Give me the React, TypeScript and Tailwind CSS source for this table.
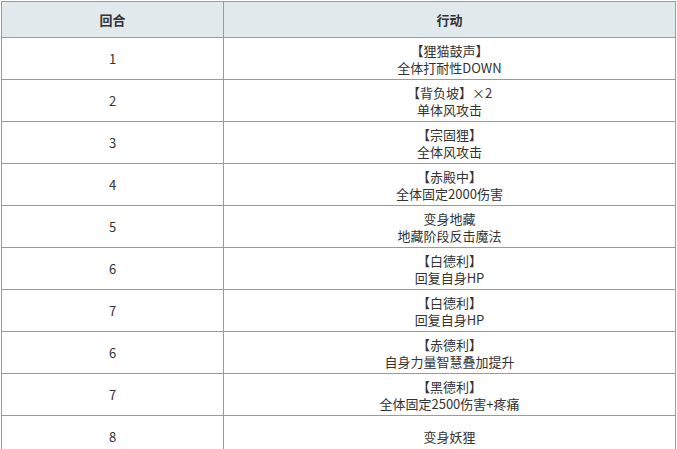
const rows: { turn: string; lines: string[] }[] = [
  { turn: "1", lines: ["【狸猫鼓声】", "全体打耐性DOWN"] },
  { turn: "2", lines: ["【背负坡】×2", "单体风攻击"] },
  { turn: "3", lines: ["【宗固狸】", "全体风攻击"] },
  { turn: "4", lines: ["【赤殿中】", "全体固定2000伤害"] },
  { turn: "5", lines: ["变身地藏", "地藏阶段反击魔法"] },
  { turn: "6", lines: ["【白德利】", "回复自身HP"] },
  { turn: "7", lines: ["【白德利】", "回复自身HP"] },
  { turn: "6", lines: ["【赤德利】", "自身力量智慧叠加提升"] },
  { turn: "7", lines: ["【黑德利】", "全体固定2500伤害+疼痛"] },
  { turn: "8", lines: ["变身妖狸"] },
];

function Cell({ children, wide, head }: { children: React.ReactNode; wide?: boolean; head?: boolean }) {
  return (
    <div
      className={`flex flex-col items-center justify-center border-r border-b border-[#9a9a9a] text-center ${
        wide ? "w-[452px]" : "w-[222px]"
      } ${head ? "h-[36px] bg-[#e1e9ec] font-bold" : "h-[42px]"}`}
    >
      {children}
    </div>
  );
}

export default function App() {
  return (
    <div className="h-[449px] w-[677px] overflow-hidden bg-white pl-px pt-px">
      <div
        className="w-[675px] border-l border-t border-[#9a9a9a] text-[13px] leading-[17px] text-[#333]"
        style={{ fontFamily: '"Noto Sans CJK SC", "Liberation Sans", sans-serif' }}
      >
        <div className="flex">
          <Cell head>回合</Cell>
          <Cell head wide>
            行动
          </Cell>
        </div>
        {rows.map((r, i) => (
          <div className="flex" key={i}>
            <Cell>{r.turn}</Cell>
            <Cell wide>
              {r.lines.map((l, j) => (
                <span key={j}>{l}</span>
              ))}
            </Cell>
          </div>
        ))}
      </div>
    </div>
  );
}
